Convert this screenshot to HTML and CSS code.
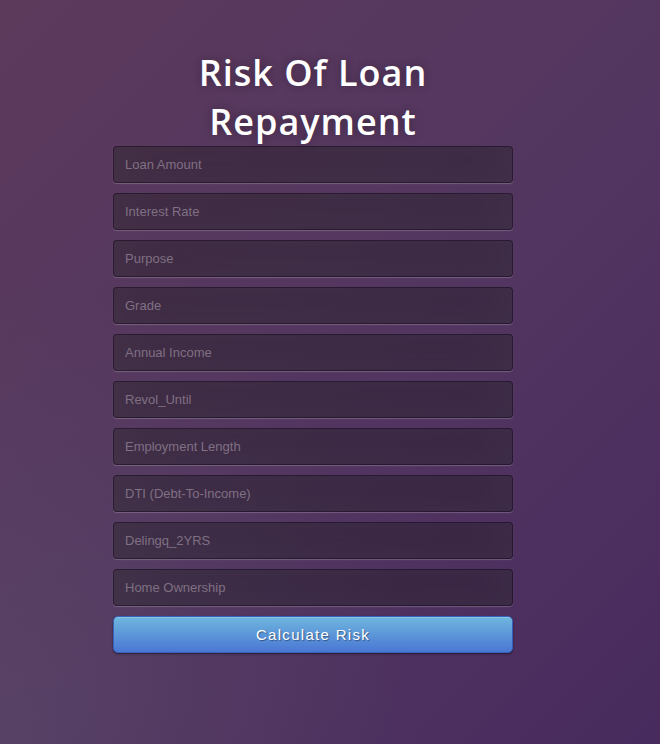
FILE: index.html
```
<!DOCTYPE html>
<html>
<head>
<meta charset="utf-8">
<link rel="stylesheet" href="styles.css">
</head>
<body>
<div class="login">
  <h1 class="title">Risk Of Loan Repayment</h1>
  <form class="form">
    <input class="field" type="text" placeholder="Loan Amount">
    <input class="field" type="text" placeholder="Interest Rate">
    <input class="field" type="text" placeholder="Purpose">
    <input class="field" type="text" placeholder="Grade">
    <input class="field" type="text" placeholder="Annual Income">
    <input class="field" type="text" placeholder="Revol_Until">
    <input class="field" type="text" placeholder="Employment Length">
    <input class="field" type="text" placeholder="DTI (Debt-To-Income)">
    <input class="field" type="text" placeholder="Delingq_2YRS">
    <input class="field" type="text" placeholder="Home Ownership">
    <button class="btn" type="button">Calculate Risk</button>
  </form>
</div>
</body>
</html>
```
FILE: styles.css
```
* { box-sizing: border-box; }
html, body { margin: 0; height: 100%; }
body {
  width: 660px;
  height: 744px;
  overflow: hidden;
  font-family: "Liberation Sans", Arial, sans-serif;
  background:
    radial-gradient(ellipse at 0% 100%, rgba(104,108,118,0.22) 0%, rgba(104,108,118,0) 45%),
    linear-gradient(135deg, #5c3a5c 0%, #533660 50%, #482b5e 100%);
}
.login {
  width: 400px;
  margin-left: 113px;
  padding-top: 48px;
  display: flex;
  flex-direction: column;
}
.title {
  margin: 0;
  font-family: "Open Sans", sans-serif;
  font-weight: 600;
  font-size: 36px;
  line-height: 49px;
  letter-spacing: 1px;
  color: #fff;
  text-align: center;
  text-shadow: 0 0 10px rgba(0,0,0,0.3);
  padding: 0 60px;
}
.form {
  display: flex;
  flex-direction: column;
  gap: 10px;
  margin: 0;
}
.field {
  width: 100%;
  height: 37px;
  margin: 0;
  padding: 0 11px;
  font-family: "Liberation Sans", Arial, sans-serif;
  font-size: 13px;
  color: #fff;
  background: rgba(0,0,0,0.3);
  border: 1px solid rgba(0,0,0,0.3);
  border-radius: 4px;
  outline: none;
  box-shadow: inset 0 -5px 45px rgba(100,100,100,0.2), 0 1px 1px rgba(255,255,255,0.2);
}
.field::placeholder { color: #7f7083; }
.btn {
  width: 100%;
  height: 37px;
  margin: 0;
  font-family: "Liberation Sans", Arial, sans-serif;
  font-size: 15px;
  letter-spacing: 1.3px;
  color: #fff;
  background-color: #4a77d4;
  background-image: linear-gradient(to bottom, #6eb6de, #4a77d4);
  border: 1px solid #3762bc;
  border-radius: 5px;
  text-shadow: 1px 1px 1px rgba(0,0,0,0.4);
  box-shadow: inset 0 1px 0 rgba(255,255,255,0.2), 0 1px 2px rgba(0,0,0,0.5);
  cursor: pointer;
}
```
